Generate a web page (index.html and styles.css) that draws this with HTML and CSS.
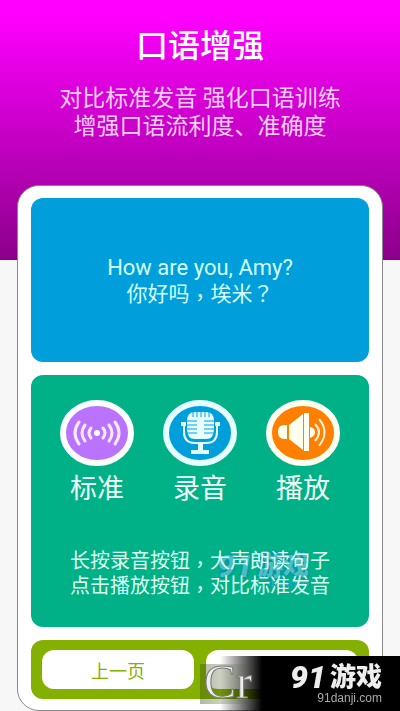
FILE: index.html
```
<!DOCTYPE html>
<html lang="zh-CN">
<head>
	<meta charset="utf-8">
	<meta name="viewport" content="width=device-width, initial-scale=1">
	<title>口语增强</title>
	<link rel="stylesheet" href="styles.css">
</head>
<body>
	<header class="banner">
		<h1>口语增强</h1>
		<p>对比标准发音 强化口语训练<br>增强口语流利度、准确度</p>
	</header>

	<main class="phone">
		<section class="sentence">
			<p class="en">How are you, Amy?</p>
			<p class="zh">你好吗<span class="punct comma" lang="zh-TW">，</span>埃米<span class="punct" lang="zh-TW">？</span></p>
		</section>

		<section class="practice">
			<div class="actions">
				<button type="button" class="action">
					<svg viewBox="0 0 74 66" aria-hidden="true">
						<ellipse cx="37" cy="33" rx="34" ry="30" fill="#b973ff" stroke="#fff" stroke-width="6"/>
						<circle cx="37" cy="33" r="3" fill="#fff"/>
						<g fill="none" stroke="#fbeaff" stroke-width="3" stroke-linecap="round">
							<path d="M31 28q-4 5 0 10M25 25q-6 8 0 16M19 22q-8 11 0 22"/>
							<path d="M43 28q4 5 0 10M49 25q6 8 0 16M55 22q8 11 0 22"/>
						</g>
					</svg>
					<span>标准</span>
				</button>
				<button type="button" class="action">
					<svg viewBox="0 0 74 66" aria-hidden="true">
						<ellipse cx="37" cy="33" rx="34" ry="30" fill="#009fdb" stroke="#e6ffff" stroke-width="6"/>
						<path d="M24 21q0-9 8-9h11q8 0 8 9v8q0 10-8 10H32q-8 0-8-10z" fill="#e6ffff"/>
						<path d="M30 12v5M34 12v5M38 12v5M42 12v5M46 12v5M24 21h10M24 25h10M24 29h10M24 33h10M41 21h10M41 25h10M41 29h10M41 33h10" stroke="#009fdb" stroke-width="1"/>
						<path d="M21 24v8q0 11 11 11h11q11 0 11-11v-8" fill="none" stroke="#e6ffff" stroke-width="2"/>
						<path d="M18 22h5v4h-5zM52 22h5v4h-5zM35 43h5v7h6v4H28v-4h7z" fill="#e6ffff"/>
					</svg>
					<span>录音</span>
				</button>
				<button type="button" class="action">
					<svg viewBox="0 0 74 66" aria-hidden="true">
						<ellipse cx="37" cy="33" rx="34" ry="30" fill="#ff7f00" stroke="#fffff0" stroke-width="6"/>
						<path d="M21 25h-3q-6 0-6 7t6 7h3zM23 25l14-11v36L23 39zM38 13h5v38h-5zM44 27q5 1 5 5t-5 6z" fill="#fffff0"/>
						<path d="M49 24q8 8 0 17M53 19q11 13 0 27" fill="none" stroke="#fff2d8" stroke-width="2"/>
					</svg>
					<span>播放</span>
				</button>
			</div>
			<div class="stamp"><b><i>91</i>游戏</b><small>91danji.com</small></div>
			<p class="tips">长按录音按钮<span class="punct comma" lang="zh-TW">，</span>大声朗读句子<br>点击播放按钮<span class="punct comma" lang="zh-TW">，</span>对比标准发音</p>
		</section>

		<nav class="pager">
			<button type="button">上一页</button>
			<button type="button" aria-label="下一页"></button>
		</nav>
	</main>

	<div class="site-mark">
		<div class="cr">Cr</div>
		<div class="brand"><b><i>91</i>游戏</b><small>91danji.com</small></div>
	</div>
</body>
</html>
```
FILE: styles.css
```
*{
	box-sizing: border-box;
}
body{
	margin: 0;
	background: #f7f7f7;
	color: #fff;
	font-family: Roboto, "Noto Sans CJK SC", sans-serif;
}
h1, p{
	margin: 0;
}
button{
	border: none;
	font-family: inherit;
	cursor: pointer;
}
.punct{
	font-family: "Noto Sans CJK TC", sans-serif;
	line-height: 1;
}
.comma{
	vertical-align: -4px;
}
.banner{
	height: 260px;
	padding-top: 26px;
	text-align: center;
	background: linear-gradient(to bottom, #ff00ff 5%, #8b008b);
}
.banner h1{
	font-size: 32px;
	line-height: 40px;
	font-weight: 500;
}
.banner p{
	margin-top: 19px;
	font-size: 23px;
	line-height: 28px;
	color: #fbd0ff;
}
.phone{
	display: flex;
	flex-direction: column;
	gap: 13px;
	margin: -75px 17px 0;
	padding: 12px 13px 11px;
	background: #fff;
	border: 1px solid #8a8a8a;
	border-radius: 22px;
}
.sentence{
	padding: 57px 10px 55px;
	border-radius: 12px;
	background: #009fdb;
	text-align: center;
	line-height: 26px;
	color: #d4ffff;
}
.en{
	font-size: 22px;
}
.zh{
	font-size: 21px;
}
.practice{
	position: relative;
	padding: 25px 29px 28px;
	border-radius: 12px;
	background: #00b188;
	color: #dcfff0;
}
.actions{
	display: flex;
	justify-content: space-between;
}
.action{
	display: flex;
	flex-direction: column;
	align-items: center;
	gap: 7px;
	padding: 0;
	background: none;
	color: #f0fff8;
	font-size: 27px;
	line-height: 32px;
}
.action svg{
	width: 74px;
	height: 66px;
}
.tips{
	position: relative;
	margin: 44px -10px 0;
	font-size: 20px;
	line-height: 25px;
	text-align: center;
	white-space: nowrap;
}
/* site logo lying under the tips */
.stamp{
	position: absolute;
	right: 60px;
	bottom: 39px;
	text-align: right;
	color: #5cc4cc;
	text-shadow: 0 0 3px #0878d0, 0 0 2px #0878d0;
	opacity: 0.8;
}
.pager{
	display: flex;
	gap: 12px;
	padding: 10px 11px;
	border-radius: 12px;
	background: #84b000;
}
.pager button{
	flex: 1;
	height: 39px;
	border-radius: 12px;
	background: #fff;
	color: #84b000;
	font-size: 18px;
}
.site-mark{
	position: fixed;
	right: 0;
	bottom: 0;
	display: flex;
	align-items: center;
	justify-content: space-between;
	width: 200px;
	height: 55px;
	padding-right: 18px;
	background: linear-gradient(to right, transparent 20px, #000 62px);
}
.cr{
	width: 60px;
	height: 40px;
	padding-left: 4px;
	background: linear-gradient(to right, rgba(60, 80, 20, 0.4), transparent);
	font: 48px/36px "Liberation Serif", serif;
	color: #eee;
	-webkit-text-stroke: 1px #777;
}
.brand small, .stamp small{
	display: block;
	font-family: "Liberation Sans", sans-serif;
}
.brand{
	text-align: right;
	color: #eee;
}
.brand b, .stamp b{
	display: flex;
	align-items: center;
	gap: 4px;
	font-size: 26px;
	line-height: 28px;
	font-weight: 900;
}
.brand i, .stamp i{
	font-size: 32px;
}
.brand small{
	font-size: 12px;
	line-height: 14px;
	color: #aaa;
}
.stamp small{
	font-size: 8px;
	line-height: 8px;
}
```
